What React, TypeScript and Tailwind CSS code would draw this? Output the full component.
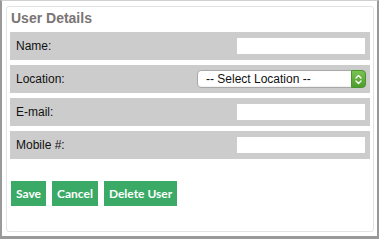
import { useState } from "react";

const fields = [
  { key: "name", label: "Name:" },
  { key: "location", label: "Location:" },
  { key: "email", label: "E-mail:" },
  { key: "mobile", label: "Mobile #:" },
];

function LocationSelect() {
  return (
    <div className="relative w-[169px] h-[18px] mr-[4px]">
      <select className="block appearance-none w-full h-full rounded-[4px] border border-[#a8a8a8] bg-white pl-[8px] text-[12px] leading-[16px] text-[#111] shadow-[inset_0_-1px_1px_rgba(0,0,0,0.06)] outline-none">
        <option>-- Select Location --</option>
      </select>
      {/* green stepper */}
      <div className="pointer-events-none absolute right-0 top-0 flex h-[18px] w-[15px] items-center justify-center rounded-r-[4px] bg-gradient-to-b from-[#79c351] to-[#4c9c2c] border border-[#4b9530]">
        <svg width="7" height="11" viewBox="0 0 7 11" fill="none" stroke="white" strokeWidth="1.4" strokeLinecap="round" strokeLinejoin="round">
          <path d="M1 4 L3.5 1.5 L6 4" />
          <path d="M1 7 L3.5 9.5 L6 7" />
        </svg>
      </div>
    </div>
  );
}

export default function App() {
  const [values, setValues] = useState<Record<string, string>>({});

  return (
    <div className="w-[379px] h-[239px] bg-white border-l-2 border-r-2 border-b-[3px] border-t border-[#999999] border-t-[#cfcfcf] pl-[4px] pt-[5px] pr-[3px] pb-[4px] font-['Liberation_Sans',Arial,sans-serif]">
      <div className="h-full rounded-[3px] border border-[#e1e4e4] px-[3px] pt-[3px]">
        <h2 className="pl-[1px] text-[14px] leading-[16px] font-bold text-[#7a7373] mb-[6px]">User Details</h2>

        <div className="flex flex-col gap-[5px]">
          {fields.map((f) => (
            <div key={f.key} className="flex h-[28px] items-center justify-between bg-[#cccccc]">
              <label className="pl-[6px] text-[12px] text-[#111]">{f.label}</label>
              {f.key === "location" ? (
                <LocationSelect />
              ) : (
                <input
                  className="mr-[5px] h-[16px] w-[128px] bg-white px-1 text-[12px] outline-none"
                  value={values[f.key] ?? ""}
                  onChange={(e) => setValues({ ...values, [f.key]: e.target.value })}
                />
              )}
            </div>
          ))}
        </div>

        <div className="mt-[22px] ml-[1px] flex gap-[6px] font-['Lato',sans-serif]">
          <button className="h-[25px] px-[5px] bg-[#3aaa66] text-white text-[12px] font-bold">Save</button>
          <button className="h-[25px] px-[5px] bg-[#3aaa66] text-white text-[12px] font-bold">Cancel</button>
          <button className="h-[25px] px-[5px] bg-[#3aaa66] text-white text-[12px] font-bold">Delete User</button>
        </div>
      </div>
    </div>
  );
}
